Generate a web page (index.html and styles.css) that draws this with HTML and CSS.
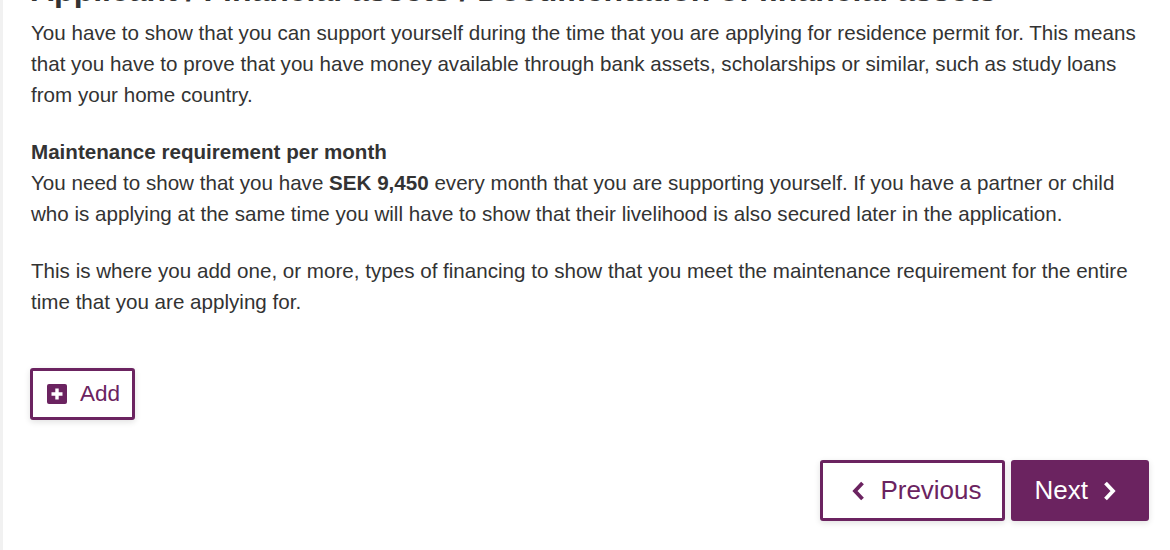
FILE: index.html
```html
<!DOCTYPE html>
<html lang="en">
<head>
    <meta charset="UTF-8">
    <meta name="viewport" content="width=device-width, initial-scale=1.0">
    <title>Documentation of financial assets</title>
    <link rel="stylesheet" href="styles.css">
</head>
<body>
    <div class="page">
        <h1 class="page-title">Applicant / Financial assets / Documentation of financial assets</h1>

        <p>You have to show that you can support yourself during the time that you are applying for residence permit for. This means that you have to prove that you have money available through bank assets, scholarships or similar, such as study loans from your home country.</p>

        <h2 class="sub-title">Maintenance requirement per month</h2>
        <p>You need to show that you have <strong>SEK 9,450</strong> every month that you are supporting yourself. If you have a partner or child who is applying at the same time you will have to show that their livelihood is also secured later in the application.</p>

        <p>This is where you add one, or more, types of financing to show that you meet the maintenance requirement for the entire time that you are applying for.</p>

        <div class="add-row">
            <button type="button" class="btn btn-outline add-btn">
                <svg class="icon-plus" viewBox="0 0 20 20" width="20" height="20" aria-hidden="true">
                    <rect x="0" y="0" width="20" height="20" rx="2" fill="#6b2360"/>
                    <path d="M10 4.5v11M4.5 10h11" stroke="#fff" stroke-width="3.4"/>
                </svg>
                Add
            </button>
        </div>

        <div class="nav-buttons">
            <button type="button" class="btn btn-outline nav-btn">
                <svg viewBox="0 0 14 22" width="14" height="22" aria-hidden="true">
                    <path d="M11.5 3L4 11l7.5 8" fill="none" stroke="#6b2360" stroke-width="3.8"/>
                </svg>
                Previous
            </button>
            <button type="button" class="btn btn-primary nav-btn">
                Next
                <svg viewBox="0 0 14 22" width="14" height="22" aria-hidden="true">
                    <path d="M2.5 3L10 11l-7.5 8" fill="none" stroke="#fff" stroke-width="3.8"/>
                </svg>
            </button>
        </div>
    </div>
</body>
</html>
```

FILE: styles.css
```css
body {
    margin: 0;
    font-family: "Liberation Sans", Arial, sans-serif;
    color: #333;
    background: #fff;
    overflow: hidden;
}

.page {
    border-left: 3px solid #f1f1f1;
    padding: 1px 21px 0 28px;
    height: 100vh;
    box-sizing: border-box;
}

.page-title {
    font-size: 32px;
    font-weight: bold;
    line-height: 40px;
    margin: -31px 0 7px;
    color: #333;
    white-space: nowrap;
}

p {
    font-size: 20.6px;
    line-height: 31px;
    margin: 0 0 26px;
}

.sub-title {
    font-size: 20.6px;
    font-weight: bold;
    line-height: 31px;
    margin: 0;
}

strong {
    font-weight: bold;
}

.btn {
    display: inline-flex;
    align-items: center;
    font-family: "Liberation Sans", Arial, sans-serif;
    border: 3px solid #6b2360;
    border-radius: 3px;
    box-shadow: 0 2px 6px rgba(0, 0, 0, 0.12);
    cursor: pointer;
}

.btn-outline {
    background: #fff;
    color: #6b2360;
}

.btn-primary {
    background: #6b2360;
    color: #fff;
}

.add-row {
    padding-top: 25px;
}

.add-btn {
    height: 52px;
    margin-left: -1px;
    padding: 0 12px 0 14px;
    gap: 13px;
    font-size: 22.5px;
}

.nav-buttons {
    display: flex;
    justify-content: flex-end;
    gap: 6px;
    margin-top: 40px;
}

.nav-btn {
    height: 61px;
    font-size: 26px;
    gap: 15px;
}

.nav-btn.btn-outline {
    padding: 0 20px 0 28px;
}

.nav-btn.btn-primary {
    padding: 0 29px 0 21px;
}
```
